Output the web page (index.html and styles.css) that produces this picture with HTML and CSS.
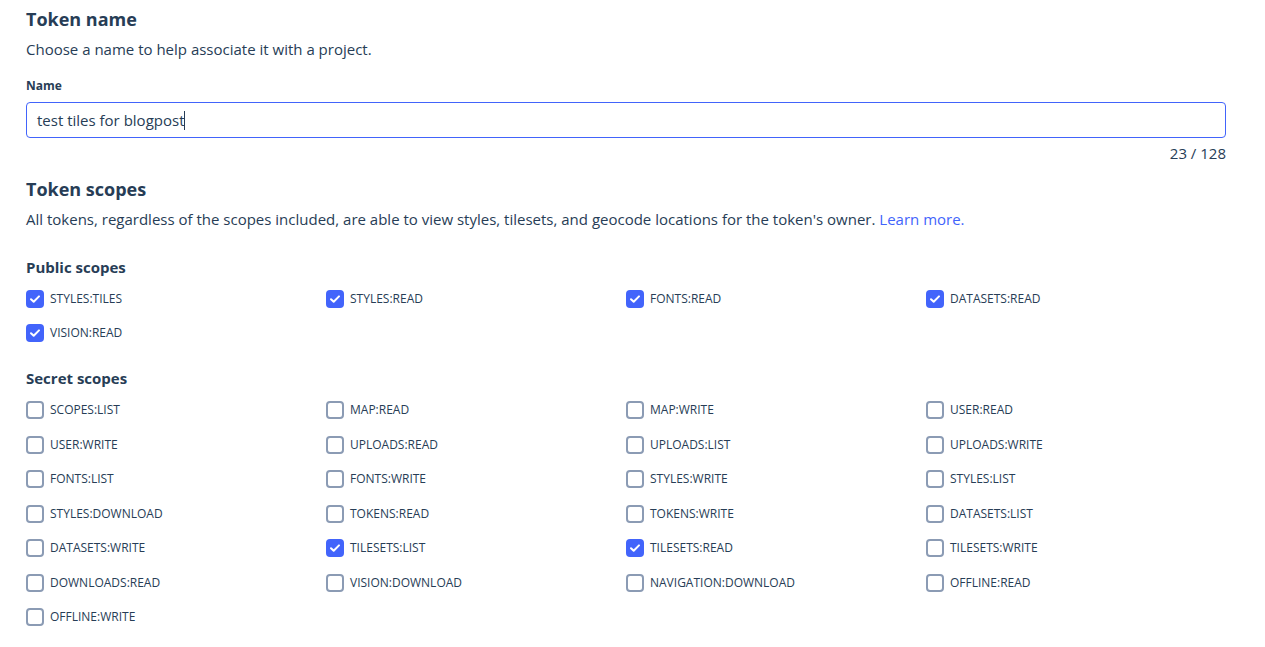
FILE: index.html
```html
<!DOCTYPE html>
<html lang="en">
<head>
<meta charset="utf-8">
<title>Token</title>
<link rel="stylesheet" href="styles.css">
</head>
<body>
<div class="page">
  <h2 class="title t1">Token name</h2>
  <p class="desc">Choose a name to help associate it with a project.</p>
  <label class="field-label">Name</label>
  <div class="input"><span>test tiles for blogpost</span><span class="caret"></span></div>
  <div class="counter">23 / 128</div>

  <h2 class="title t2">Token scopes</h2>
  <p class="desc">All tokens, regardless of the scopes included, are able to view styles, tilesets, and geocode locations for the token's owner. <a class="link">Learn more.</a></p>

  <h3 class="group g1">Public scopes</h3>
  <div class="grid public">
    <div class="item on"><span class="box"><svg viewBox="0 0 18 18"><path d="M5 9.2l2.7 2.6L13 6.4"/></svg></span>STYLES:TILES</div>
    <div class="item on"><span class="box"><svg viewBox="0 0 18 18"><path d="M5 9.2l2.7 2.6L13 6.4"/></svg></span>STYLES:READ</div>
    <div class="item on"><span class="box"><svg viewBox="0 0 18 18"><path d="M5 9.2l2.7 2.6L13 6.4"/></svg></span>FONTS:READ</div>
    <div class="item on"><span class="box"><svg viewBox="0 0 18 18"><path d="M5 9.2l2.7 2.6L13 6.4"/></svg></span>DATASETS:READ</div>
    <div class="item on"><span class="box"><svg viewBox="0 0 18 18"><path d="M5 9.2l2.7 2.6L13 6.4"/></svg></span>VISION:READ</div>
  </div>

  <h3 class="group g2">Secret scopes</h3>
  <div class="grid secret">
    <div class="item"><span class="box"></span>SCOPES:LIST</div>
    <div class="item"><span class="box"></span>MAP:READ</div>
    <div class="item"><span class="box"></span>MAP:WRITE</div>
    <div class="item"><span class="box"></span>USER:READ</div>
    <div class="item"><span class="box"></span>USER:WRITE</div>
    <div class="item"><span class="box"></span>UPLOADS:READ</div>
    <div class="item"><span class="box"></span>UPLOADS:LIST</div>
    <div class="item"><span class="box"></span>UPLOADS:WRITE</div>
    <div class="item"><span class="box"></span>FONTS:LIST</div>
    <div class="item"><span class="box"></span>FONTS:WRITE</div>
    <div class="item"><span class="box"></span>STYLES:WRITE</div>
    <div class="item"><span class="box"></span>STYLES:LIST</div>
    <div class="item"><span class="box"></span>STYLES:DOWNLOAD</div>
    <div class="item"><span class="box"></span>TOKENS:READ</div>
    <div class="item"><span class="box"></span>TOKENS:WRITE</div>
    <div class="item"><span class="box"></span>DATASETS:LIST</div>
    <div class="item"><span class="box"></span>DATASETS:WRITE</div>
    <div class="item on"><span class="box"><svg viewBox="0 0 18 18"><path d="M5 9.2l2.7 2.6L13 6.4"/></svg></span>TILESETS:LIST</div>
    <div class="item on"><span class="box"><svg viewBox="0 0 18 18"><path d="M5 9.2l2.7 2.6L13 6.4"/></svg></span>TILESETS:READ</div>
    <div class="item"><span class="box"></span>TILESETS:WRITE</div>
    <div class="item"><span class="box"></span>DOWNLOADS:READ</div>
    <div class="item"><span class="box"></span>VISION:DOWNLOAD</div>
    <div class="item"><span class="box"></span>NAVIGATION:DOWNLOAD</div>
    <div class="item"><span class="box"></span>OFFLINE:READ</div>
    <div class="item"><span class="box"></span>OFFLINE:WRITE</div>
  </div>
</div>
</body>
</html>
```
FILE: styles.css
```css
html, body {
  margin: 0;
  padding: 0;
  background: #fff;
}
body {
  font-family: "Open Sans", "Liberation Sans", sans-serif;
  color: #273d56;
  -webkit-font-smoothing: antialiased;
}
.page {
  width: 1200px;
  padding: 0 0 0 26px;
  display: flex;
  flex-direction: column;
}
.title {
  margin: 0;
  font-size: 18px;
  line-height: 24px;
  font-weight: 700;
}
.t1 { margin-top: 7px; }
.t2 { margin-top: 12px; }
.desc {
  margin: 6px 0 0;
  font-size: 15px;
  line-height: 24px;
}
.link {
  color: #4264fb;
  cursor: pointer;
}
.field-label {
  margin-top: 16px;
  font-size: 12px;
  line-height: 18px;
  font-weight: 700;
}
.input {
  margin-top: 7px;
  height: 36px;
  box-sizing: border-box;
  border: 1px solid #4264fb;
  border-radius: 4px;
  padding: 0 10px;
  display: flex;
  align-items: center;
  font-size: 15px;
}
.caret {
  display: inline-block;
  width: 1px;
  height: 19px;
  background: #273d56;
}
.counter {
  margin-top: 3px;
  text-align: right;
  font-size: 15px;
  line-height: 24px;
}
.group {
  margin: 0;
  font-size: 15px;
  line-height: 24px;
  font-weight: 700;
}
.g1 { margin-top: 24px; }
.g2 { margin-top: 24px; }
.grid {
  display: grid;
  grid-template-columns: repeat(4, 300px);
  row-gap: 16px;
}
.grid.public { margin-top: 11px; }
.grid.secret {
  margin-top: 11px;
  row-gap: 16.5px;
}
.item {
  display: flex;
  align-items: center;
  height: 18px;
  font-size: 12px;
  line-height: 18px;
  white-space: nowrap;
}
.box {
  flex: none;
  width: 18px;
  height: 18px;
  box-sizing: border-box;
  border: 2px solid #8b9bb4;
  border-radius: 4px;
  margin-right: 6px;
  display: flex;
  align-items: center;
  justify-content: center;
}
.item.on .box {
  border: none;
  background: #4264fb;
}
.box svg {
  width: 18px;
  height: 18px;
}
.box path {
  fill: none;
  stroke: #fff;
  stroke-width: 2;
  stroke-linecap: round;
  stroke-linejoin: round;
}
```
